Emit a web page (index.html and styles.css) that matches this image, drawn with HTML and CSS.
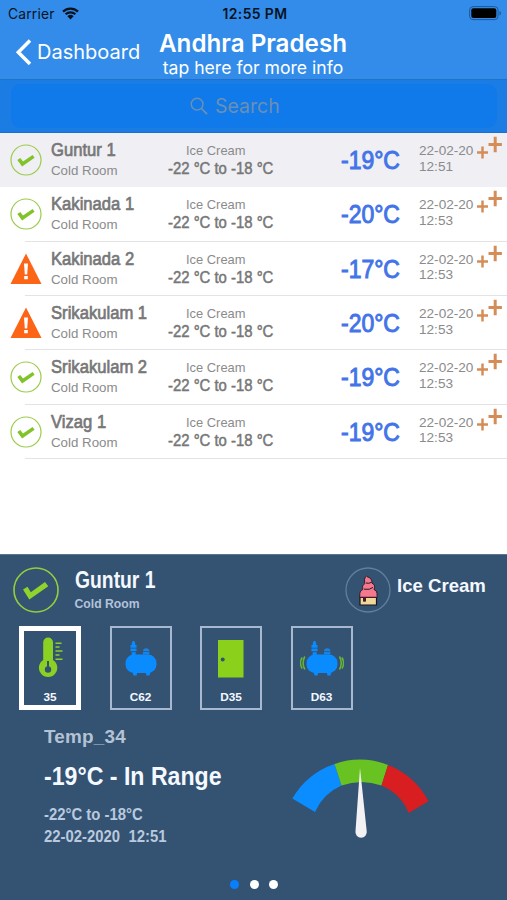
FILE: index.html
```html
<!DOCTYPE html>
<html lang="en">
<head>
<meta charset="utf-8">
<title>Andhra Pradesh</title>
<link rel="stylesheet" href="styles.css">
</head>
<body>
<svg width="0" height="0" class="defs">
  <symbol id="ok" viewBox="0 0 46 46"><circle cx="23" cy="23" r="22" fill="none" stroke="#92cf3e" stroke-width="1.6"/><path d="M10 22.500l4.500-2.700 3.300 5.500L32 15l3.300 4.200-19 13.300z" fill="#8fd32d"/></symbol>
  <symbol id="ok-small" viewBox="0 0 32 32"><circle cx="16" cy="16" r="15" fill="none" stroke="#9ccb4c" stroke-width="1.2"/><path d="M7.300 15.900l3-2 2.700 3.500 9.600-6.400 2 2.800-12.500 8.700z" fill="#80c42a"/></symbol>
  <symbol id="warn" viewBox="0 0 32 32"><path d="M16 .5L31.500 31H.5z" fill="#fc6516"/><path d="M14 10.500h4l-.8 11h-2.400zM14.200 23h3.600v3.300h-3.600z" fill="#fff"/></symbol>
  <symbol id="plus" viewBox="0 0 28 24"><path d="M6.500 10.500v12M1 16.500h11" stroke="#d58d58" stroke-width="2.500"/><path d="M19.200.8v15.400M12.500 8.500h13.400" stroke="#d58d58" stroke-width="3"/></symbol>
  <symbol id="compressor" viewBox="0 0 44 36"><rect x="6.500" y="13.500" width="31" height="18.500" rx="8.500" fill="#0a8cff"/><path d="M13.500 31h5l-1 3.500h-3zM26.500 31h5l-1 3.500h-3zM12.700 14v-3h4v3zM11.500 4h6v6.500h-6zM12.800 1.500h3.400V4h-3.400zM13.500 0h2v2h-2z" fill="#0a8cff"/><path d="M11 7.200h7M11.500 10.800h6" stroke="#345272" stroke-width=".7"/><path d="M24 13.500v-3a3.200 3.200 0 0 1 6.400 0v3z" fill="#1683e6"/><path d="M23 10.500h8.500" stroke="#345272" stroke-width=".7"/></symbol>
</svg>
<main class="screen">
  <header class="nav">
    <div class="status">
      <span class="carrier">Carrier</span>
      <svg class="wifi" viewBox="0 0 17 13"><path d="M1 4.600a10.700 10.700 0 0 1 15 0M3.600 7.300a7 7 0 0 1 9.800 0" fill="none" stroke="#09131f" stroke-width="2.200"/><path d="M5.400 9.300a4.500 4.500 0 0 1 6.200 0L8.500 12.500z" fill="#09131f"/></svg>
      <span class="clock">12:55 PM</span>
      <svg class="battery" viewBox="0 0 33 15"><rect x=".6" y=".6" width="28.500" height="13" rx="3.500" fill="none" stroke="#1d5995" stroke-width="1"/><rect x="2.300" y="2.300" width="25" height="9.600" rx="2" fill="#000"/><path d="M30.500 5v4.500q1.500-.8 1.500-2.200T30.500 5z" fill="#1d5995"/></svg>
    </div>
    <div class="bar">
      <svg class="back" viewBox="0 0 17 27"><path d="M15 1.500L3.300 13.300 15 25.100" fill="none" stroke="#fff" stroke-width="3.500"/></svg>
      <span class="back-text">Dashboard</span>
      <div class="title"><h1>Andhra Pradesh</h1><p>tap here for more info</p></div>
    </div>
  </header>
  <div class="search"><div class="field"><svg viewBox="0 0 19 19"><circle cx="7.500" cy="7.500" r="6.200" fill="none" stroke="#6c8fb4" stroke-width="1.500"/><path d="M12 12l6 6" stroke="#6c8fb4" stroke-width="1.800"/></svg><span>Search</span></div></div>

  <section class="list">
    <div class="row selected"><svg class="state"><use href="#ok-small"/></svg><div class="name"><b>Guntur 1</b><span>Cold Room</span></div><div class="product"><span>Ice Cream</span><b>-22 °C to -18 °C</b></div><div class="temp">-19°C</div><div class="when">22-02-20<br>12:51</div><svg class="plus"><use href="#plus"/></svg></div>
    <div class="row"><svg class="state"><use href="#ok-small"/></svg><div class="name"><b>Kakinada 1</b><span>Cold Room</span></div><div class="product"><span>Ice Cream</span><b>-22 °C to -18 °C</b></div><div class="temp">-20°C</div><div class="when">22-02-20<br>12:53</div><svg class="plus"><use href="#plus"/></svg></div>
    <div class="row"><svg class="state"><use href="#warn"/></svg><div class="name"><b>Kakinada 2</b><span>Cold Room</span></div><div class="product"><span>Ice Cream</span><b>-22 °C to -18 °C</b></div><div class="temp">-17°C</div><div class="when">22-02-20<br>12:53</div><svg class="plus"><use href="#plus"/></svg></div>
    <div class="row"><svg class="state"><use href="#warn"/></svg><div class="name"><b>Srikakulam 1</b><span>Cold Room</span></div><div class="product"><span>Ice Cream</span><b>-22 °C to -18 °C</b></div><div class="temp">-20°C</div><div class="when">22-02-20<br>12:53</div><svg class="plus"><use href="#plus"/></svg></div>
    <div class="row"><svg class="state"><use href="#ok-small"/></svg><div class="name"><b>Srikakulam 2</b><span>Cold Room</span></div><div class="product"><span>Ice Cream</span><b>-22 °C to -18 °C</b></div><div class="temp">-19°C</div><div class="when">22-02-20<br>12:53</div><svg class="plus"><use href="#plus"/></svg></div>
    <div class="row"><svg class="state"><use href="#ok-small"/></svg><div class="name"><b>Vizag 1</b><span>Cold Room</span></div><div class="product"><span>Ice Cream</span><b>-22 °C to -18 °C</b></div><div class="temp">-19°C</div><div class="when">22-02-20<br>12:53</div><svg class="plus"><use href="#plus"/></svg></div>
  </section>

  <section class="panel">
    <div class="panel-head">
      <svg class="big-ok"><use href="#ok"/></svg>
      <div class="room"><h2>Guntur 1</h2><p>Cold Room</p></div>
      <svg class="cone" viewBox="0 0 46 46"><circle cx="23" cy="23" r="22" fill="none" stroke="#607e9e" stroke-width="1.300"/><path d="M15 29h16.500v9H15z" fill="#f0d79a" stroke="#171722" stroke-width="1.200"/><path d="M14.800 30.500v-4q0-3 3-4-1.500-4 2-6-1-4 .5-6.500 1.500-1.500 1.500-.5 6 2 5 6.500 4.200 2 2.200 6.500 3 1 3 4v4z" fill="#f4798f" stroke="#241822" stroke-width=".9"/><path d="M19 22.200q6 1 9-1.800M21 16q3 .8 5-.5" fill="none" stroke="#241822" stroke-width="1"/><path d="M15.500 29.700h15.500v1.300H21v3.200q-1.500 1.300-3 0V31h-2.500z" fill="#4a1a28"/></svg>
      <strong>Ice Cream</strong>
    </div>
    <div class="cards">
      <div class="card active"><svg viewBox="0 0 44 44"><path d="M15.200 7.500a4.900 4.900 0 0 1 9.800 0V25a9.200 9.200 0 1 1-9.800 0z" fill="#8bd123"/><path d="M20 26v8" stroke="#345272" stroke-width="2"/><circle cx="20" cy="34.500" r="3.200" fill="#345272"/><path d="M27.500 8.300h6M27.500 12h4M27.500 16h7M27.500 20h4M27.500 24.300h7" stroke="#8bd123" stroke-width="1.500"/></svg><span>35</span></div>
      <div class="card"><svg viewBox="0 0 44 44"><use href="#compressor" x="0" y="6" width="44" height="36"/></svg><span>C62</span></div>
      <div class="card"><svg viewBox="0 0 44 44"><path d="M9 5h25.500v37.500H9z" fill="#8bd11b"/><circle cx="13.700" cy="24.500" r="2" fill="#345272"/></svg><span>D35</span></div>
      <div class="card"><svg viewBox="0 0 44 44"><use href="#compressor" x="0" y="6" width="44" height="36"/><path d="M4.800 21.500q-3.500 6.500 0 13M2.200 22.500q-3.500 5.500 0 11M39.500 21.500q3.500 6.500 0 13M42 22.500q3 5.500 0 11" fill="none" stroke="#65b33b" stroke-width="1.600"/></svg><span>D63</span></div>
    </div>
    <div class="reading">
      <div class="values"><h3>Temp_34</h3><p class="main">-19°C - In Range</p><p class="small">-22°C to -18°C</p><p class="small stamp">22-02-2020&nbsp; 12:51</p></div>
      <svg class="gauge" viewBox="288 755 145 86"><path d="M292.300 798.600A78 78 0 0 1 334.500 764l7 21.500A51 51 0 0 0 315 812z" fill="#0b8dff"/><path d="M334.500 764A78 78 0 0 1 388 765l-6.500 20.500A60 60 0 0 0 341.500 785.500z" fill="#68c322"/><path d="M388 765A78 78 0 0 1 428.500 801.200L408.700 813A51 51 0 0 0 381.500 785.500z" fill="#d81e21"/><path d="M360 768l6.700 63a5.700 5.700 0 1 1-11.200 0z" fill="#f4f1f5"/></svg>
    </div>
    <div class="dots"><i class="on"></i><i></i><i></i></div>
  </section>
</main>
</body>
</html>
```
FILE: styles.css
```css
* { box-sizing: border-box; margin: 0; padding: 0; }
body { width: 507px; height: 900px; overflow: hidden; background: #fff; font-family: "Liberation Sans", Arial, sans-serif; }
svg { display: block; flex: none; }
.defs { position: absolute; }
.screen { display: flex; flex-direction: column; width: 507px; height: 900px; }
.nav, .search { font-family: Inter, sans-serif; }
.nav { height: 80px; background: #338ce9; border-bottom: 1.500px solid #1d72ca; }
.status { display: grid; grid-template-columns: 54px 161px 246px 33px; height: 28px; padding-left: 8px; line-height: 28px; font-size: 13.800px; color: #09131f; }
.wifi { width: 17px; height: 13px; margin-top: 7px; }
.clock { font-weight: 600; font-size: 13.900px; margin-left: -.5px; }
.carrier { letter-spacing: .2px; }
.clock { letter-spacing: .4px; }
.battery { width: 33px; height: 15px; margin-top: 6px; }
.bar { display: grid; grid-template-columns: 22px 118px 1fr; padding-left: 15px; height: 51px; color: #fff; }
.back { width: 17px; height: 27px; margin-top: 11px; }
.back-text { font-size: 20px; line-height: 28px; margin-top: 10px; white-space: nowrap; }
.title { width: 196px; text-align: center; white-space: nowrap; }
.title h1 { font-size: 24.200px; font-weight: 600; line-height: 30px; margin-top: 1px; }
.title p { font-size: 17.600px; line-height: 20px; margin-top: -1.500px; }
.search { height: 53px; background: #1b7de4; padding: 4px 10px 5px 11px; border-bottom: 1px solid #1a72d0; }
.field { display: flex; align-items: center; height: 44px; border-radius: 9px; background: #107aea; padding-left: 179px; color: #6c8fb4; font-size: 19.500px; }
.field svg { width: 18px; height: 18px; margin-right: 7px; }
.list { height: 421px; }
.row { display: grid; grid-template-columns: 41px 117px 173px 78px 57px 28px; height: 54.350px; padding-left: 10px; color: #8b8b8b; background: linear-gradient(#e3e3e5, #e3e3e5) 25px 100% / 482px 1px no-repeat; }
.row.selected { background: #efeff4; }
.state { width: 32px; height: 32px; margin-top: 11px; }
.name { padding-top: 6px; }
.name b, .name span, .product b, .product span { display: block; white-space: nowrap; }
.name b, .product b, .temp { font-weight: 400; -webkit-text-stroke: .7px currentColor; }
.name b { font-size: 19px; line-height: 22px; color: #777; transform: scaleX(.875); transform-origin: 0 0; }
.name span { margin-top: 2px; font-size: 13.300px; line-height: 16px; }
.product { padding-top: 10px; }
.product span { padding-left: 18px; font-size: 12.900px; line-height: 16px; }
.product b { font-size: 16px; line-height: 20px; color: #777; transform: scaleX(.93); transform-origin: 0 0; -webkit-text-stroke-width: .5px; }
.temp { padding-top: 12px; font-size: 25.500px; line-height: 30px; color: #4374e8; transform: scaleX(.9); transform-origin: 0 0; -webkit-text-stroke-width: 1px; }
.when { padding-top: 10px; font-size: 13.600px; line-height: 15.700px; white-space: nowrap; }
.plus { width: 28px; height: 24px; margin-top: 3px; }
.panel { height: 346px; background: #345272; color: #f4f8ff; display: flex; flex-direction: column; border-top: 1px solid #5c748e; }
.panel-head { display: grid; grid-template-columns: 61.500px 270.500px 52px 1fr; height: 71px; padding-left: 13px; }
.big-ok, .cone { width: 46px; height: 46px; margin-top: 12px; }
.room { padding-top: 11px; }
.room h2 { font-size: 23px; line-height: 28px; transform: scaleX(.84); transform-origin: 0 0; }
.room p { font-size: 12.200px; line-height: 16px; font-weight: 700; margin-top: 2px; color: #b3c3da; }
.panel-head strong { font-size: 18.600px; line-height: 22px; padding-top: 20px; white-space: nowrap; }
.cards { display: flex; gap: 28.500px; padding-left: 19px; height: 84px; }
.card { width: 62px; height: 84px; border: 2px solid #a7b8cf; display: flex; flex-direction: column; align-items: center; }
.card svg { width: 44px; height: 44px; margin-top: 7px; }
.card.active svg { margin-top: 4px; }
.card.active { border: 5px solid #fff; }
.card span { font-size: 11.800px; line-height: 14px; font-weight: 700; margin-top: 11px; }
.reading { display: grid; grid-template-columns: 244px 145px; padding-left: 44px; height: 165px; }
.values { padding-top: 15.500px; white-space: nowrap; }
.values h3 { font-size: 18.900px; line-height: 22px; color: #b4c3d4; letter-spacing: .2px; }
.values p { font-weight: 700; transform-origin: 0 0; }
.main { font-size: 25px; line-height: 30px; margin-top: 13.500px; transform: scaleX(.925); }
.small { font-size: 16px; line-height: 20px; margin-top: 14px; color: #b9c9de; transform: scaleX(.93); }
.stamp { margin-top: 1.500px; }
.gauge { width: 145px; height: 86px; margin-top: 45px; }
.dots { display: flex; gap: 10.500px; padding: 5px 0 0 230px; }
.dots i { width: 9px; height: 9px; border-radius: 50%; background: #fff; }
.dots .on { background: #087fff; }
```
